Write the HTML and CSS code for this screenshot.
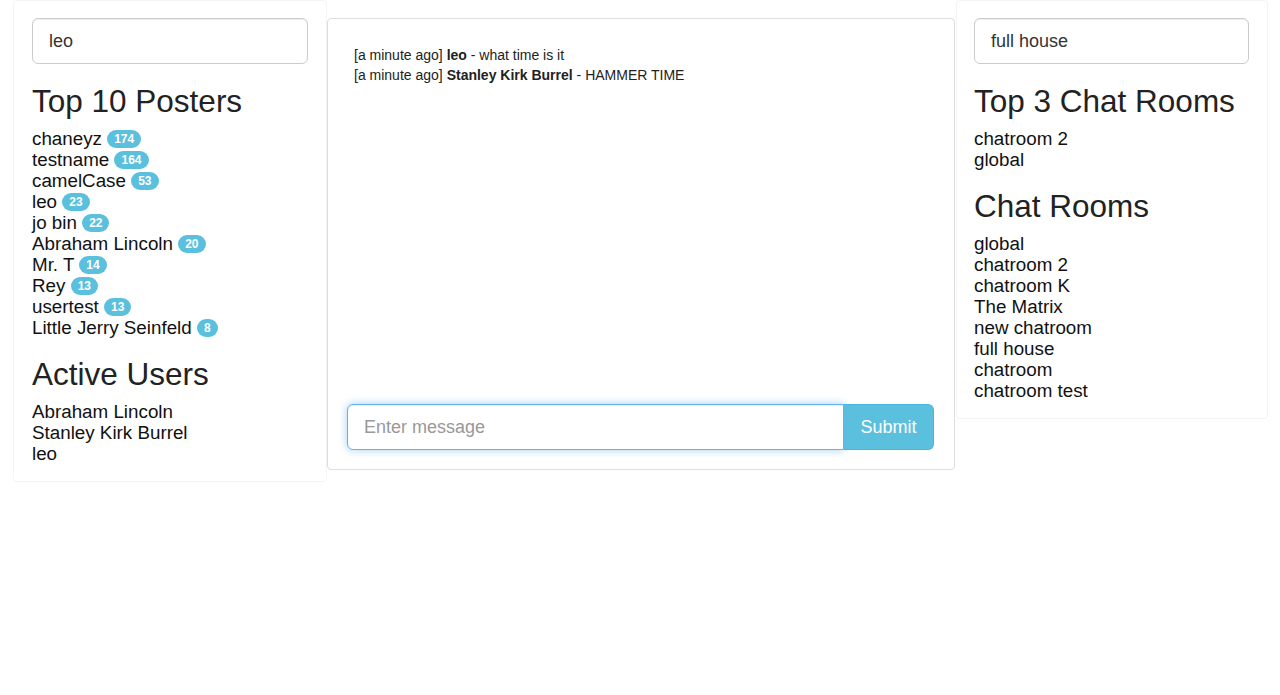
FILE: index.html
```html
<!DOCTYPE html>
<html>
<head>
<meta charset="utf-8">
<title>Chat</title>
<link rel="stylesheet" href="styles.css">
</head>
<body>
<div class="layout">
  <aside class="side">
    <input class="field" type="text" value="leo">
    <h2 class="title">Top 10 Posters</h2>
    <ul class="list">
      <li>chaneyz <span class="badge">174</span></li>
      <li>testname <span class="badge">164</span></li>
      <li>camelCase <span class="badge">53</span></li>
      <li>leo <span class="badge">23</span></li>
      <li>jo bin <span class="badge">22</span></li>
      <li>Abraham Lincoln <span class="badge">20</span></li>
      <li>Mr. T <span class="badge">14</span></li>
      <li>Rey <span class="badge">13</span></li>
      <li>usertest <span class="badge">13</span></li>
      <li>Little Jerry Seinfeld <span class="badge">8</span></li>
    </ul>
    <h2 class="title">Active Users</h2>
    <ul class="list">
      <li>Abraham Lincoln</li>
      <li>Stanley Kirk Burrel</li>
      <li>leo</li>
    </ul>
  </aside>

  <main class="chat">
    <div class="messages">
      <div class="msg">[a minute ago] <b>leo</b> - what time is it</div>
      <div class="msg">[a minute ago] <b>Stanley Kirk Burrel</b> - HAMMER TIME</div>
    </div>
    <form class="send">
      <input class="field field-focus" type="text" placeholder="Enter message">
      <button class="submit" type="button">Submit</button>
    </form>
  </main>

  <aside class="side side-right">
    <input class="field" type="text" value="full house">
    <h2 class="title">Top 3 Chat Rooms</h2>
    <ul class="list">
      <li>chatroom 2</li>
      <li>global</li>
    </ul>
    <h2 class="title">Chat Rooms</h2>
    <ul class="list">
      <li>global</li>
      <li>chatroom 2</li>
      <li>chatroom K</li>
      <li>The Matrix</li>
      <li>new chatroom</li>
      <li>full house</li>
      <li>chatroom</li>
      <li>chatroom test</li>
    </ul>
  </aside>
</div>
</body>
</html>
```

FILE: styles.css
```css
* { box-sizing: border-box; }

html, body {
  margin: 0;
  padding: 0;
  background: #fff;
  font-family: "Liberation Sans", Arial, sans-serif;
  color: #222;
}

.layout {
  display: grid;
  grid-template-columns: 314px 628px 313px;
  column-gap: 0;
  align-items: start;
  padding: 0 13px;
}

.side {
  border: 1px solid #f4f4f4;
  border-radius: 4px;
  padding: 17px 18px 18px 18px;
}

.side-right {
  margin-left: 1px;
  padding-left: 17px;
}

.field {
  display: block;
  width: 100%;
  height: 46px;
  padding: 10px 16px;
  font-family: inherit;
  font-size: 18px;
  color: #333;
  background: #fff;
  border: 1px solid #ccc;
  border-radius: 6px;
  box-shadow: inset 0 1px 1px rgba(0, 0, 0, 0.075);
  outline: none;
}

.field::placeholder {
  color: #999;
}

.title {
  margin: 20px 0 9px;
  padding-top: 1px;
  font-size: 31.5px;
  font-weight: 400;
  line-height: 33px;
  color: #222;
}

.list {
  list-style: none;
  margin: 0;
  padding: 0;
  font-size: 18.8px;
  line-height: 21px;
  color: #111;
}

.list li {
  padding-top: 1px;
  margin-bottom: -1px;
}

.badge {
  display: inline-block;
  min-width: 10px;
  padding: 3px 7px;
  font-size: 12px;
  font-weight: 700;
  line-height: 1;
  color: #fff;
  text-align: center;
  white-space: nowrap;
  vertical-align: middle;
  background: #5bc0de;
  border-radius: 10px;
  margin-top: -2px;
}

.chat {
  margin-top: 18px;
  height: 452px;
  border: 1px solid #ddd;
  border-radius: 4px;
  padding: 19px 20px 19px 19px;
  display: flex;
  flex-direction: column;
}

.messages {
  flex: 1;
  padding: 7px;
  font-size: 14px;
  line-height: 20px;
  color: #222;
}

.send {
  display: flex;
  margin: 0;
}

.send .field {
  flex: 1;
  width: auto;
  border-radius: 6px 0 0 6px;
}

.field-focus {
  border-color: #66afe9;
  box-shadow: inset 0 1px 1px rgba(0, 0, 0, 0.075), 0 0 8px rgba(102, 175, 233, 0.6);
  position: relative;
  z-index: 1;
}

.submit {
  height: 46px;
  width: 90px;
  padding: 10px 16px;
  font-family: inherit;
  font-size: 18px;
  color: #fff;
  background: #5bc0de;
  border: 1px solid #46b8da;
  border-left: none;
  border-radius: 0 6px 6px 0;
}
```
